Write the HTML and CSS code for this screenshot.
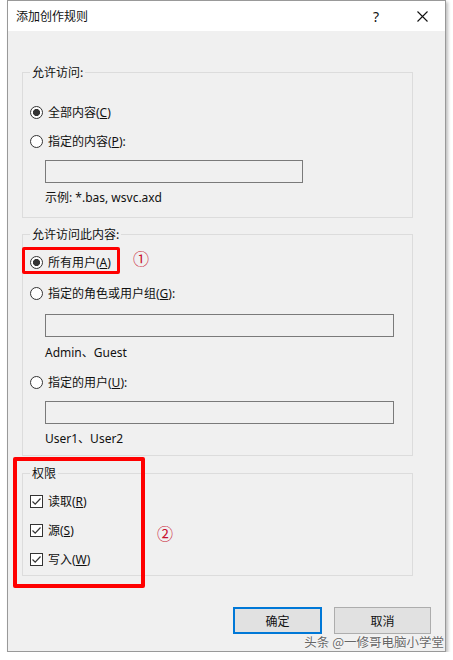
FILE: index.html
```html
<!DOCTYPE html>
<html lang="zh-CN">
<head>
  <meta charset="UTF-8">
  <meta name="viewport" content="width=device-width, initial-scale=1.0">
  <title>添加创作规则</title>
  <link rel="stylesheet" href="styles.css">
</head>
<body>
  <div class="window">
    <div class="titlebar">
      <span class="title">添加创作规则</span>
      <span class="tb-btn help">?</span>
      <span class="tb-btn">
        <svg width="11" height="11" viewBox="0 0 11 11"><path d="M0.5 0.5 L10.5 10.5 M10.5 0.5 L0.5 10.5" stroke="#111" stroke-width="1.1" fill="none"/></svg>
      </span>
    </div>

    <div class="content">
      <fieldset class="group g1">
        <legend>允许访问:</legend>
        <div class="opt"><span class="radio on"></span>全部内容(<u>C</u>)</div>
        <div class="opt gap"><span class="radio"></span>指定的内容(<u>P</u>):</div>
        <div class="field short"></div>
        <div class="hint">示例: *.bas, wsvc.axd</div>
      </fieldset>

      <fieldset class="group g2">
        <legend>允许访问此内容:</legend>
        <div class="opt"><span class="radio on"></span>所有用户(<u>A</u>)</div>
        <div class="opt gap2"><span class="radio"></span>指定的角色或用户组(<u>G</u>):</div>
        <div class="field long"></div>
        <div class="hint h2">Admin、Guest</div>
        <div class="opt gap2"><span class="radio"></span>指定的用户(<u>U</u>):</div>
        <div class="field long f3"></div>
        <div class="hint">User1、User2</div>
      </fieldset>

      <fieldset class="group g3">
        <legend>权限</legend>
        <div class="opt"><span class="check"></span>读取(<u>R</u>)</div>
        <div class="opt gap"><span class="check"></span>源(<u>S</u>)</div>
        <div class="opt gap"><span class="check"></span>写入(<u>W</u>)</div>
      </fieldset>

      <div class="buttons">
        <button class="btn default">确定</button>
        <button class="btn cancel">取消</button>
      </div>
    </div>

    <div class="mark mark1"></div>
    <div class="mark mark2"></div>
    <span class="num num1">①</span>
    <span class="num num2">②</span>
    <span class="watermark">头条 @一修哥电脑小学堂</span>
  </div>
</body>
</html>
```

FILE: styles.css
```css
body {
  margin: 0;
  background: #fff;
  font-family: "Noto Sans", "Noto Sans CJK SC", sans-serif;
  font-size: 12px;
  color: #111;
}
.window {
  position: relative;
  margin-left: 7px;
  width: 439px;
  height: 652px;
  box-sizing: border-box;
  border: 1px solid #999;
  background: #f0f0f0;
  box-shadow: 2px 2px 3px rgba(0, 0, 0, 0.25);
  display: flex;
  flex-direction: column;
}
.titlebar {
  height: 30px;
  background: #fff;
  display: flex;
  align-items: center;
  padding-left: 8px;
}
.title {
  flex: 1;
  font-family: "Noto Sans CJK SC", sans-serif;
  font-size: 12px;
  line-height: 16px;
}
.tb-btn {
  width: 46px;
  height: 30px;
  display: flex;
  align-items: center;
  justify-content: center;
}
.help {
  font-size: 14px;
  color: #111;
}
.content {
  padding: 33px 0 0 14px;
}
.group {
  margin: 0;
  width: 391px;
  box-sizing: border-box;
  border: 1px solid #dcdcdc;
  padding: 0 7px;
}
.group legend {
  padding: 0 2px;
  line-height: 16px;
  font-family: "Noto Sans CJK SC", sans-serif;
}
.g1 { padding-top: 22px; padding-bottom: 11px; }
.g2 { margin-top: 8px; padding-top: 10px; padding-bottom: 8px; }
.g3 { margin-top: 9px; padding-top: 10px; padding-bottom: 6px; }
.opt {
  display: flex;
  align-items: center;
  height: 20px;
}
.opt.gap { margin-top: 9px; }
.opt.gap2 { margin-top: 11px; }
.radio {
  width: 13px;
  height: 13px;
  box-sizing: border-box;
  border: 1px solid #333;
  border-radius: 50%;
  background: #fff;
  margin-right: 5px;
}
.radio.on {
  background: radial-gradient(circle, #333 0 3.3px, #fff 3.8px);
}
.check {
  width: 13px;
  height: 13px;
  box-sizing: border-box;
  border: 1px solid #333;
  background: #fff url("data:image/svg+xml,%3Csvg xmlns='http://www.w3.org/2000/svg' width='11' height='11'%3E%3Cpath d='M1.5 5.5 L4.2 8.2 L9.5 2.5' stroke='%23333' stroke-width='1.2' fill='none'/%3E%3C/svg%3E") center/11px 11px no-repeat;
  margin-right: 5px;
}
.field {
  height: 23px;
  box-sizing: border-box;
  border: 1px solid #7a7a7a;
  background: #f0f0f0;
  margin: 9px 0 0 15px;
}
.field.short { width: 258px; }
.field.long { width: 349px; margin-top: 11px; }
.field.f3 { margin-top: 9px; }
.hint {
  margin: 7px 0 0 15px;
  line-height: 16px;
}
.hint.h2 { margin-top: 8px; }
.buttons {
  display: flex;
  justify-content: flex-end;
  gap: 12px;
  margin-top: 31px;
  padding-right: 14px;
}
.btn {
  height: 27px;
  box-sizing: border-box;
  background: #e1e1e1;
  font-family: "Noto Sans CJK SC", sans-serif;
  font-size: 12px;
  color: #111;
  padding: 0;
}
.btn.default {
  width: 89px;
  border: 2px solid #0078d7;
}
.btn.cancel {
  width: 97px;
  border: 1px solid #adadad;
}
.mark {
  position: absolute;
  box-sizing: border-box;
  border: 3px solid #ff0000;
  border-radius: 2px;
}
.mark1 { left: 14px; top: 246px; width: 98px; height: 27px; }
.mark2 { left: 5px; top: 456px; width: 132px; height: 131px; border-width: 4px; }
.num {
  position: absolute;
  font-family: "Noto Sans CJK SC", sans-serif;
  font-size: 16px;
  line-height: 16px;
  color: #c8102e;
}
.num1 { left: 125px; top: 249px; }
.num2 { left: 149px; top: 524px; }
.watermark {
  position: absolute;
  right: 1px;
  top: 633px;
  font-family: "Noto Sans CJK SC", sans-serif;
  font-size: 12.5px;
  line-height: 16px;
  color: #666;
  text-shadow: 0 0 2px #fff, 0 0 1px #fff;
}
```
